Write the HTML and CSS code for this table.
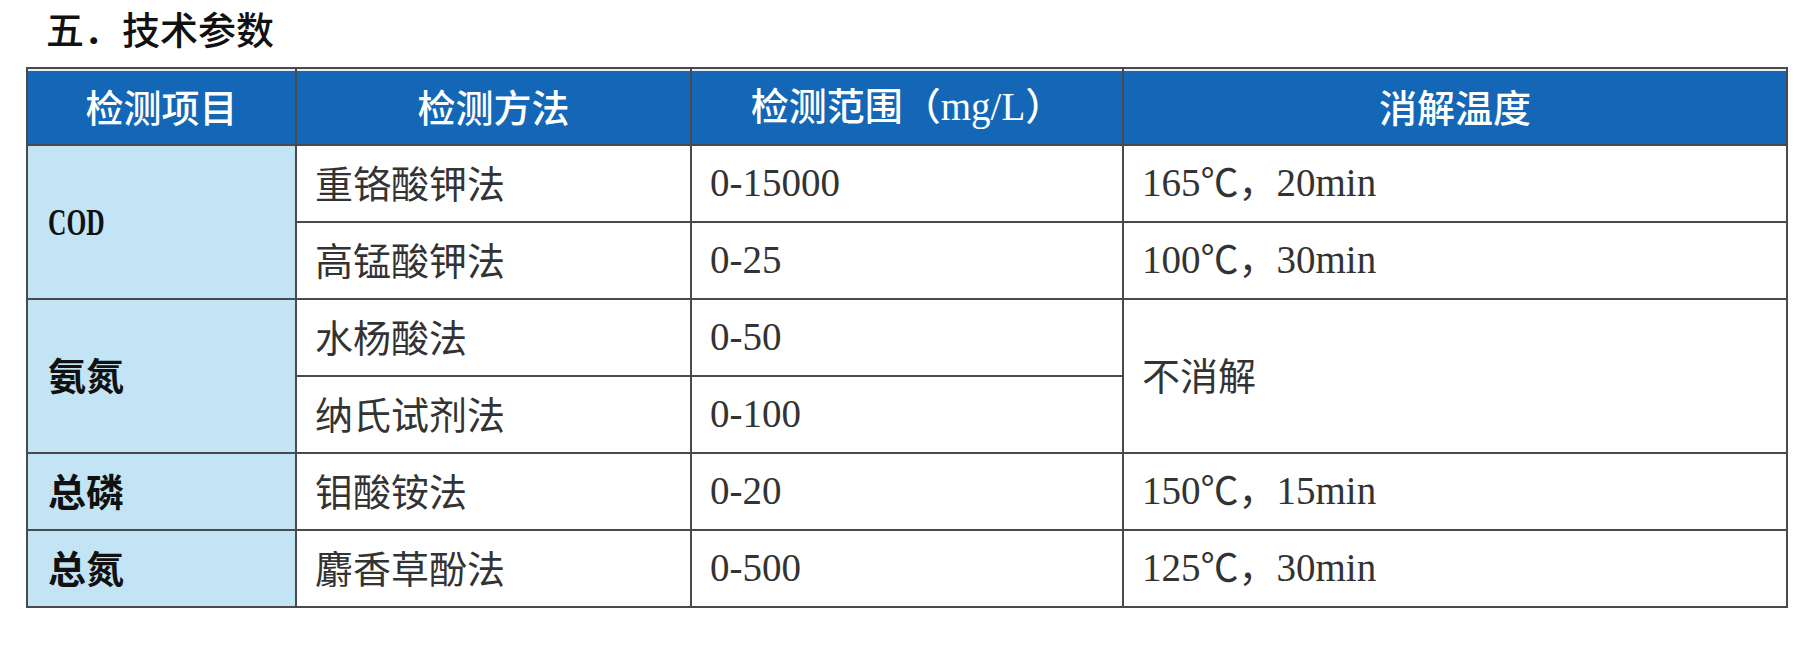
FILE: index.html
```html
<!DOCTYPE html>
<html lang="zh-CN">
<head>
<meta charset="utf-8">
<title>技术参数</title>
<link rel="stylesheet" href="styles.css">
</head>
<body>
<div class="page">
  <h2 class="title">五．技术参数</h2>
  <table class="spec">
    <colgroup>
      <col class="c1"><col class="c2"><col class="c3"><col class="c4">
    </colgroup>
    <thead>
      <tr>
        <th>检测项目</th>
        <th>检测方法</th>
        <th>检测范围（<span class="lat">mg/L</span>）</th>
        <th>消解温度</th>
      </tr>
    </thead>
    <tbody>
      <tr>
        <td class="item" rowspan="2"><span class="cod">COD</span></td>
        <td>重铬酸钾法</td>
        <td><span class="lat">0-15000</span></td>
        <td><span class="lat">165</span>℃，<span class="lat">20min</span></td>
      </tr>
      <tr>
        <td>高锰酸钾法</td>
        <td><span class="lat">0-25</span></td>
        <td><span class="lat">100</span>℃，<span class="lat">30min</span></td>
      </tr>
      <tr>
        <td class="item" rowspan="2">氨氮</td>
        <td>水杨酸法</td>
        <td><span class="lat">0-50</span></td>
        <td rowspan="2">不消解</td>
      </tr>
      <tr>
        <td>纳氏试剂法</td>
        <td><span class="lat">0-100</span></td>
      </tr>
      <tr>
        <td class="item">总磷</td>
        <td>钼酸铵法</td>
        <td><span class="lat">0-20</span></td>
        <td><span class="lat">150</span>℃，<span class="lat">15min</span></td>
      </tr>
      <tr>
        <td class="item">总氮</td>
        <td>麝香草酚法</td>
        <td><span class="lat">0-500</span></td>
        <td><span class="lat">125</span>℃，<span class="lat">30min</span></td>
      </tr>
    </tbody>
  </table>
</div>
</body>
</html>
```

FILE: styles.css
```css
html, body {
  margin: 0;
  padding: 0;
  background: #ffffff;
}

.page {
  padding: 0 0 0 26px;
  font-family: "Noto Sans CJK SC", "Noto Sans", sans-serif;
}

.title {
  margin: 0;
  padding: 7px 0 0 20px;
  height: 50px;
  box-sizing: border-box;
  font-size: 38px;
  line-height: 42px;
  font-weight: 500;
  color: #111;
}

.spec {
  margin-top: 17px;
  border-collapse: collapse;
  table-layout: fixed;
  width: 1760px;
  font-size: 38px;
  color: #333333;
}

.c1 { width: 269px; }
.c2 { width: 395px; }
.c3 { width: 432px; }
.c4 { width: 664px; }

.spec th,
.spec td {
  border: 2px solid #4a4a4a;
  height: 77px;
  padding: 0 0 4px 18px;
  box-sizing: border-box;
  line-height: 40px;
  vertical-align: middle;
  text-align: left;
  font-weight: 400;
  white-space: nowrap;
}

.spec th {
  background: #1467b6;
  color: #ffffff;
  text-align: center;
  padding: 0 0 2px 0;
  font-weight: 500;
  box-shadow: inset 0 2px 0 #e8eef5;
}

.spec td.item {
  background: #c3e4f5;
  color: #111;
  font-weight: 700;
  padding-left: 20px;
}

.lat {
  font-family: "Liberation Serif", serif;
  font-size: 39px;
}

.cod {
  display: inline-block;
  font-family: "Liberation Serif", serif;
  font-weight: 700;
  transform: scaleX(0.67);
  transform-origin: left center;
}
```
